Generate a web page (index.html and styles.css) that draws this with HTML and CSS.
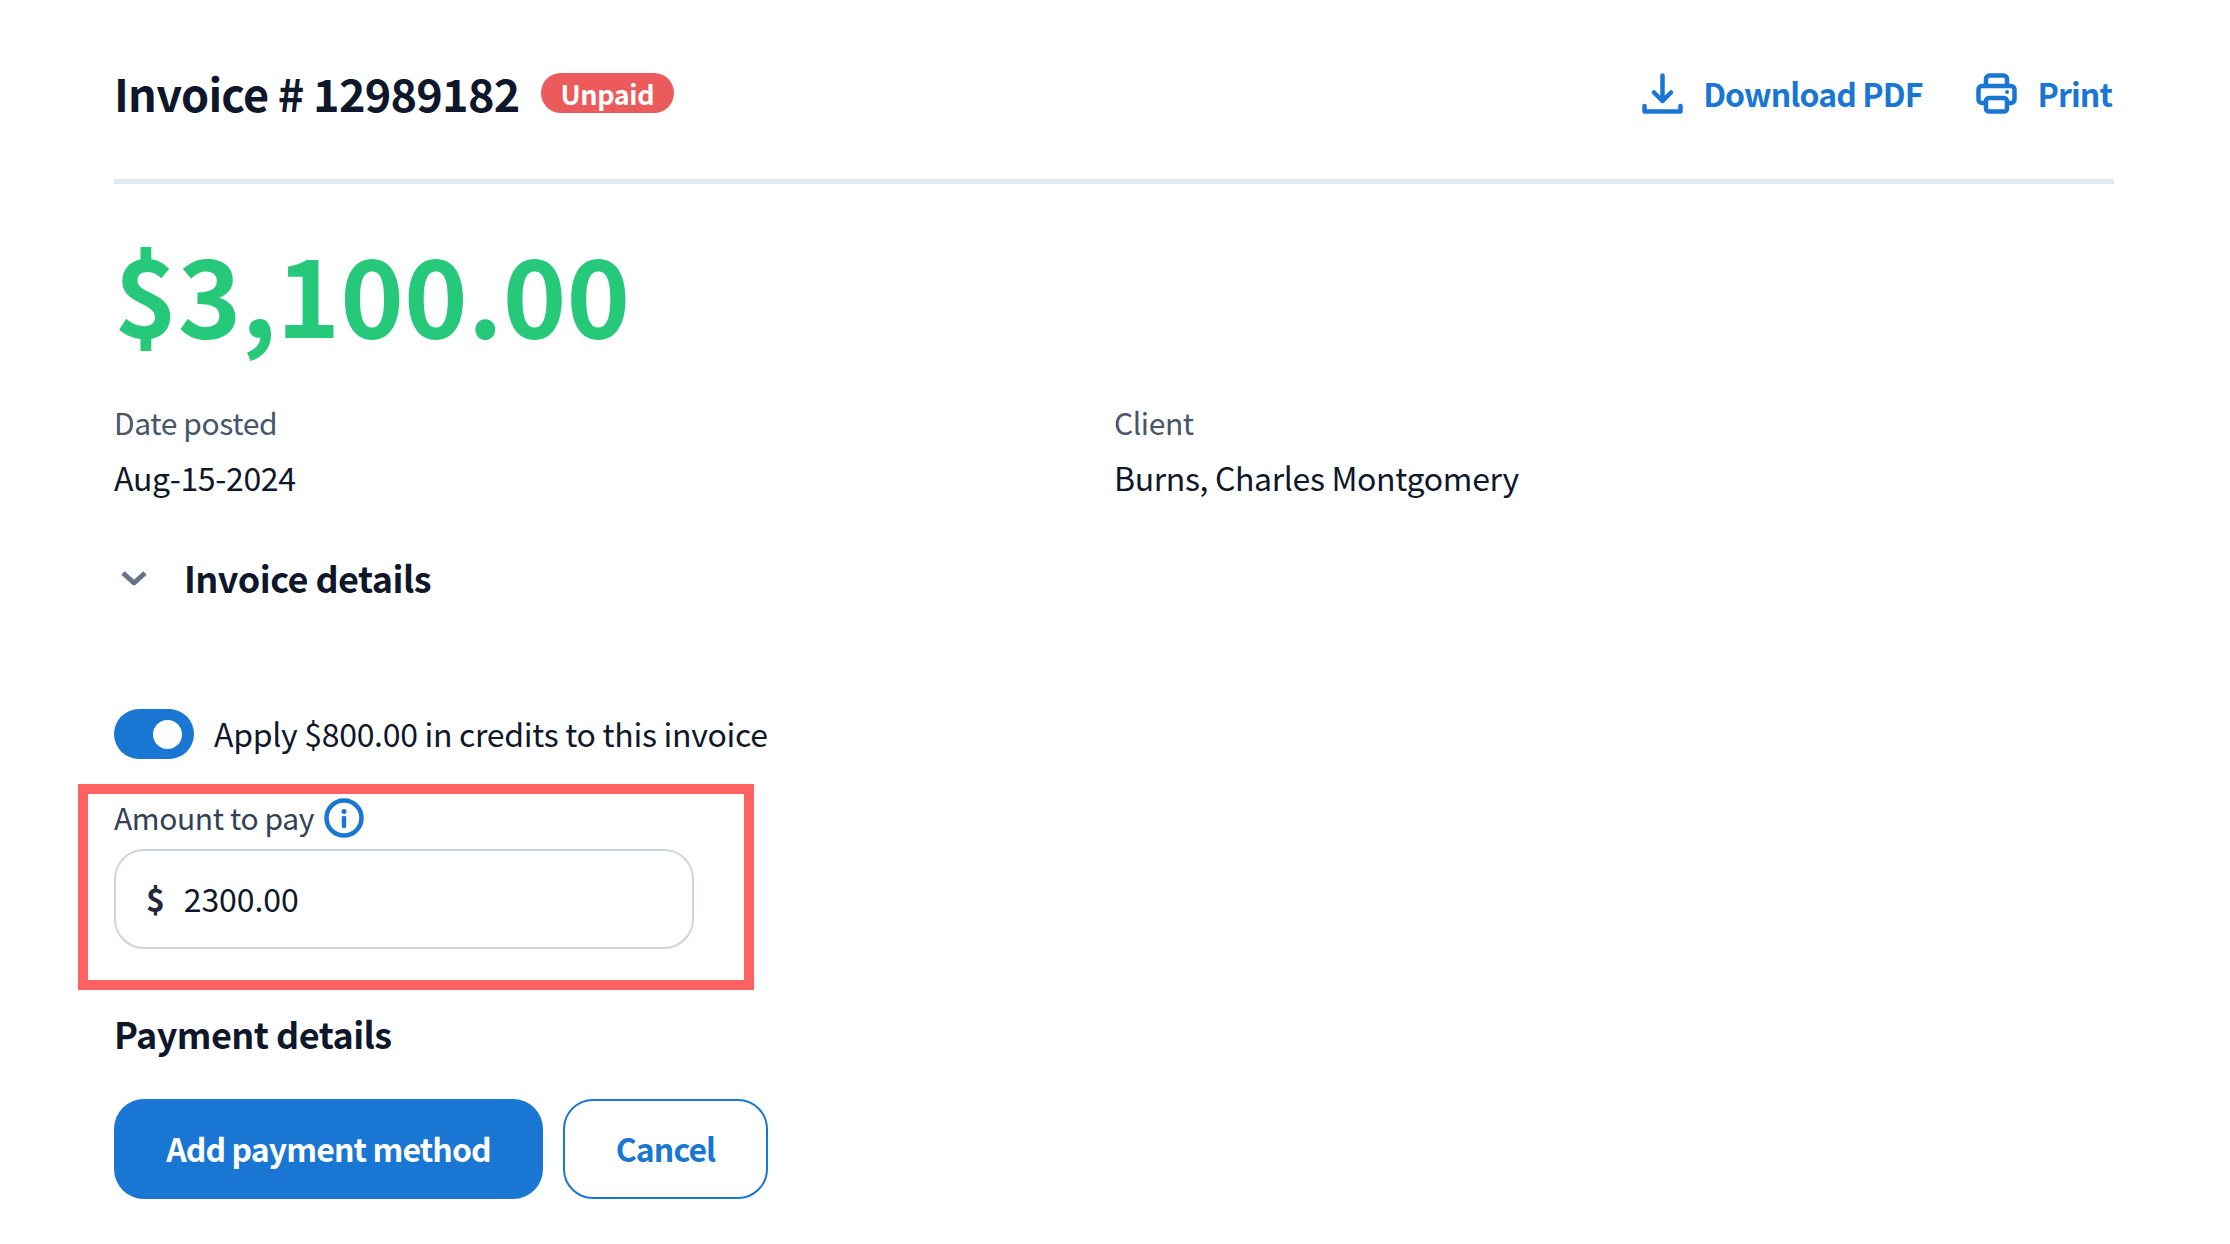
FILE: index.html
```html
<!DOCTYPE html>
<html lang="en">
<head>
    <meta charset="UTF-8">
    <meta name="viewport" content="width=device-width, initial-scale=1.0">
    <title>Invoice</title>
    <link rel="stylesheet" href="styles.css">
</head>
<body>

<div class="invoice">
    <div class="header">
        <div class="title-row">
            <h1 class="title">Invoice # 12989182</h1>
            <span class="badge">Unpaid</span>
        </div>
        <div class="actions">
            <a class="action">
                <svg class="action-icon" viewBox="0 0 41 41" fill="none" stroke="currentColor" stroke-width="4.500" stroke-linecap="round" stroke-linejoin="round">
                    <path d="M20.500 2.500v25"/>
                    <path d="M12 19.500l8.500 8.500 8.500-8.500"/>
                    <path d="M2.500 33v5.500h36V33"/>
                </svg>
                Download PDF
            </a>
            <a class="action">
                <svg class="action-icon" viewBox="0 0 41 41" fill="none" stroke="currentColor" stroke-width="4.500" stroke-linecap="round" stroke-linejoin="round">
                    <path d="M10 13V6a3.500 3.500 0 0 1 3.500-3.500h14A3.500 3.500 0 0 1 31 6v7"/>
                    <path d="M9 30H6a3.500 3.500 0 0 1-3.500-3.500V16.500A3.500 3.500 0 0 1 6 13h29a3.500 3.500 0 0 1 3.500 3.500v10A3.500 3.500 0 0 1 35 30h-3"/>
                    <rect x="10" y="25" width="21" height="13.500" rx="3"/>
                    <circle cx="31" cy="19" r="1" stroke-width="2"/>
                </svg>
                Print
            </a>
        </div>
    </div>

    <div class="amount">$3,100.00</div>

    <div class="meta">
        <div>
            <div class="meta-label">Date posted</div>
            <div class="meta-value">Aug-15-2024</div>
        </div>
        <div>
            <div class="meta-label">Client</div>
            <div class="meta-value">Burns, Charles Montgomery</div>
        </div>
    </div>

    <div class="details-toggle">
        <svg class="chevron" viewBox="0 0 28 16" fill="none" stroke="#64748b" stroke-width="5" stroke-linejoin="round">
            <path d="M3 3l11 10 11-10"/>
        </svg>
        <h2 class="section-title">Invoice details</h2>
    </div>

    <div class="credits">
        <span class="switch"><span class="switch-knob"></span></span>
        <span class="credits-text">Apply $800.00 in credits to this invoice</span>
    </div>

    <div class="pay-field">
        <div class="highlight"></div>
        <div class="field-label">
            Amount to pay
            <svg class="info-icon" viewBox="0 0 40 40" fill="none" stroke="#1976d2">
                <circle cx="20" cy="20" r="17.500" stroke-width="4.500"/>
                <circle cx="20" cy="13.500" r="2.500" fill="#1976d2" stroke="none"/>
                <path d="M20 20v8" stroke-width="4.500" stroke-linecap="round"/>
            </svg>
        </div>
        <div class="input">
            <span class="currency">$</span>
            <span>2300.00</span>
        </div>
    </div>

    <h2 class="section-title payment-title">Payment details</h2>

    <div class="buttons">
        <button class="btn btn-primary">Add payment method</button>
        <button class="btn btn-outline">Cancel</button>
    </div>
</div>

</body>
</html>
```

FILE: styles.css
```css
body {
    margin: 0;
    background-color: white;
    color: #0f172a;
    font-family: "Noto Sans CJK SC", "Noto Sans", sans-serif;
}
.invoice {
    padding: 54px 116px 0 114px;
}
.header {
    display: flex;
    justify-content: space-between;
    align-items: center;
    height: 78px;
    padding-bottom: 47px;
    border-bottom: 5px solid #e2e8f0;
}
.title-row {
    display: flex;
    align-items: center;
    gap: 21px;
}
.title {
    margin: 0;
    font-size: 45px;
    font-weight: 600;
    letter-spacing: -0.75px;
    line-height: 60px;
}
.badge {
    display: flex;
    align-items: center;
    height: 40px;
    padding: 0 20px;
    border-radius: 20px;
    background-color: #ec5b5b;
    color: white;
    font-size: 27px;
    font-weight: 600;
    letter-spacing: -0.4px;
}
.actions {
    display: flex;
    gap: 54px;
    margin-right: 2px;
}
.action {
    display: flex;
    align-items: center;
    gap: 20px;
    color: #1976d2;
    font-size: 32px;
    font-weight: 600;
    letter-spacing: -0.9px;
}
.action-icon {
    width: 41px;
    height: 41px;
}
.amount {
    margin-top: 37px;
    color: #26c979;
    font-size: 108px;
    font-weight: 700;
    line-height: 140px;
}
.meta {
    display: grid;
    grid-template-columns: 1fr 1fr;
    margin-top: 39px;
}
.meta-label {
    color: #475569;
    font-size: 30px;
    letter-spacing: -0.4px;
    line-height: 44px;
}
.meta-value {
    margin-top: 11px;
    font-size: 32px;
    letter-spacing: -0.35px;
    line-height: 44px;
}
.details-toggle {
    display: flex;
    align-items: center;
    gap: 36px;
    margin-top: 53px;
}
.chevron {
    width: 28px;
    height: 16px;
    margin-top: 2px;
    margin-left: 6px;
}
.section-title {
    margin: 0;
    font-size: 36px;
    font-weight: 600;
    letter-spacing: -0.55px;
    line-height: 50px;
}
.credits {
    display: flex;
    align-items: center;
    gap: 20px;
    margin-top: 107px;
    font-size: 32px;
    letter-spacing: -0.3px;
}
.credits-text {
    padding-bottom: 3px;
}
.switch {
    display: flex;
    justify-content: flex-end;
    align-items: center;
    box-sizing: border-box;
    width: 80px;
    height: 50px;
    padding-right: 12px;
    border-radius: 25px;
    background-color: #1976d2;
}
.switch-knob {
    width: 29px;
    height: 29px;
    border-radius: 50%;
    background-color: white;
}
.pay-field {
    position: relative;
    margin-top: 36px;
}
/* red annotation box drawn over the field */
.highlight {
    position: absolute;
    top: -11px;
    left: -36px;
    box-sizing: border-box;
    width: 676px;
    height: 206px;
    border: 10px solid #ff6361;
}
.field-label {
    display: flex;
    align-items: center;
    gap: 10px;
    color: #334155;
    font-size: 30px;
    letter-spacing: -0.4px;
    line-height: 44px;
}
.info-icon {
    width: 40px;
    height: 40px;
    margin-top: 2px;
}
.input {
    display: flex;
    align-items: center;
    gap: 19px;
    box-sizing: border-box;
    width: 580px;
    height: 100px;
    margin-top: 10px;
    padding-bottom: 2px;
    padding-left: 30px;
    border: 2px solid #cbd5e1;
    border-radius: 30px;
    font-size: 32px;
    letter-spacing: -0.1px;
}
.currency {
    color: #1e293b;
    font-weight: 600;
}
.payment-title {
    margin-top: 59px;
}
.buttons {
    display: flex;
    gap: 20px;
    margin-top: 41px;
}
.btn {
    box-sizing: border-box;
    height: 100px;
    padding-bottom: 4px;
    border-radius: 30px;
    font-family: inherit;
    font-size: 32px;
    font-weight: 600;
    letter-spacing: -0.9px;
}
.btn-primary {
    width: 429px;
    border: none;
    background-color: #1976d2;
    color: white;
}
.btn-outline {
    width: 205px;
    border: 2px solid #1976d2;
    background-color: white;
    color: #1976d2;
}
```
